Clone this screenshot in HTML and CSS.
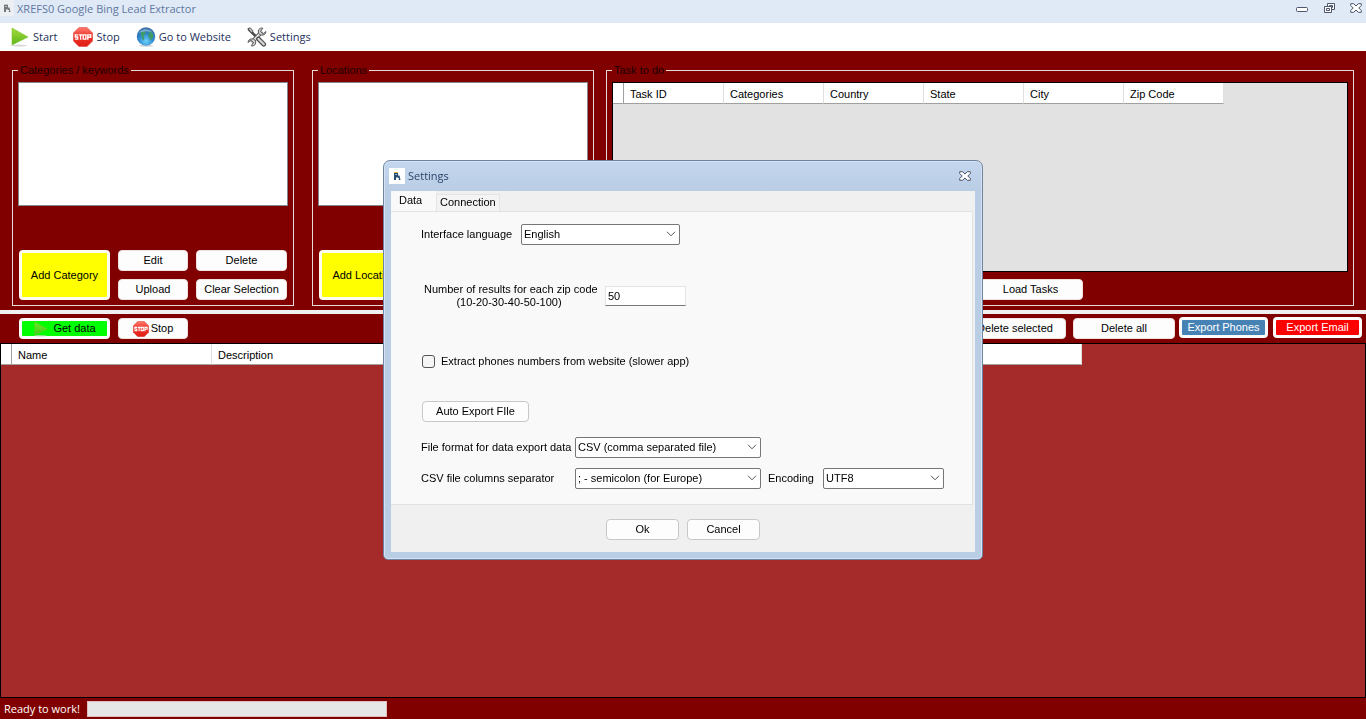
FILE: index.html
```html
<!DOCTYPE html>
<html lang="en">
<head>
<meta charset="utf-8">
<title>XREFS0 Google Bing Lead Extractor</title>
<link rel="stylesheet" href="styles.css">
</head>
<body>
<svg class="defs" aria-hidden="true">
  <defs>
    <linearGradient id="green" x1="0" y1="0" x2="0" y2="1"><stop offset="0" stop-color="#a4dc3c"/><stop offset="1" stop-color="#5db51c"/></linearGradient>
    <linearGradient id="red" x1="0" y1="0" x2="0" y2="1"><stop offset="0" stop-color="#ff7a6e"/><stop offset=".5" stop-color="#ee3026"/><stop offset="1" stop-color="#e02018"/></linearGradient>
    <radialGradient id="sea" cx=".5" cy=".75" r=".7"><stop offset="0" stop-color="#6cd0fa"/><stop offset=".6" stop-color="#2c84cc"/><stop offset="1" stop-color="#3a6ea8"/></radialGradient>
    <symbol id="play" viewBox="0 0 20 20"><ellipse cx="9" cy="18.600" rx="8" ry="1" fill="#d8d8d8"/><path d="M2 1 18 10 2 18Z" fill="url(#green)" stroke="#7cc42c" stroke-width=".6"/></symbol>
    <symbol id="stop" viewBox="0 0 20 20"><path d="M6 .4h8L19.600 6v8L14 19.600H6L.4 14V6Z" fill="url(#red)" stroke="#d8453c" stroke-width=".6"/><g fill="none" stroke="#fff" stroke-width="1.400"><path d="M5 7.900H2.300v2.100h2.400v2.100H1.900M5.800 7.900h3.600M7.600 7.900v4.800M10.200 7.900h2.700v4.200h-2.700ZM14.800 12.700V7.900h2.900v2.400h-2.900"/></g></symbol>
    <symbol id="globe" viewBox="0 0 20 20"><ellipse cx="10" cy="18.800" rx="7" ry="1" fill="#d4d4d4"/><circle cx="10" cy="9.500" r="9.200" fill="url(#sea)"/><path d="M5 5 8 4l2 1-.5 1.500L8 8l-.5 2 1 1.500-1 2-1.500-2L5 8.500ZM12.500 4l2.500.5 2 2.500.5 3-2 2.500-1.500 1-.5-2.500-1.500-2 .5-2 1.500-1.200-1.500-.8Z" fill="#3f9a6c"/><path d="M2.500 6Q9-1 17 5.500 9 3 2.500 6Z" fill="#c8e8f8" opacity=".5"/></symbol>
    <symbol id="tools" viewBox="0 0 20 20"><path d="M2 2.500 8.500 9" stroke="#4c4c4c" stroke-width="2.600" stroke-linecap="round"/><path d="m4.500 15.500 10.500-11" stroke="#555" stroke-width="4"/><path d="m4.500 15.500 10.500-11" stroke="#dedede" stroke-width="2.200"/><path d="m11.500 12 5.300 5.300" stroke="#505050" stroke-width="4.600" stroke-linecap="round"/><path d="m11.500 12 5.300 5.300" stroke="#d8d8d8" stroke-width="2.200" stroke-linecap="round"/><path d="M19 4.500 16.300 6.800 13.500 4.500 15.800 1.200C12.500.4 10.500 3 11.700 6.500c1.800 2.500 6.800 2.300 7.300-2ZM1 15.500 3.700 13.200l2.800 2.300L4.200 18.800c3.300.8 5.300-1.800 4.100-5.300-1.800-2.500-6.800-2.300-7.300 2Z" fill="#d0d0d0" stroke="#555"/><path d="M1 1.500 3.200.8l3 3.200-2 2Z" fill="#bbb" stroke="#444" stroke-width=".8"/></symbol>
    <symbol id="closer" viewBox="0 0 12 10"><path d="M.7.700h3L6 3l2.300-2.300h3v1.800L8.800 5l2.500 2.500v1.800h-3L6 7 3.700 9.300h-3V7.500L3.200 5 .7 2.500Z" fill="#fff" stroke="#4d566c"/></symbol>
    <symbol id="chevron" viewBox="0 0 10 6"><path d="m1 .8 4 4 4-4" fill="none" stroke="#555"/></symbol>
    <symbol id="app" viewBox="0 0 8 8"><path d="M1 1h4v2.500h1.500L7.500 8H5.800L5 5.500H3V8H1Z" fill="#244e78"/><path d="M1 0h4v1H1Z" fill="#e2b33c"/><path d="M2.500 2h1v1h-1ZM5 6h1v1H5Z" fill="#fff"/></symbol>
  </defs>
</svg>

<div class="window">
  <header class="titlebar">
    <span class="app-icon small"><svg><use href="#app"/></svg></span>
    <h1>XREFS0 Google Bing Lead Extractor</h1>
    <div class="window-buttons">
      <button type="button" aria-label="Minimize"><svg width="12" height="10" viewBox="0 0 12 10"><rect x=".5" y="4.500" width="11" height="4" rx="1" fill="#fff" stroke="#4d566c"/></svg></button>
      <button type="button" aria-label="Restore"><svg width="12" height="10" viewBox="0 0 12 10"><g fill="#fff" stroke="#4d566c"><path d="M4.500.500h7v6h-7Z"/><path d="M6.500 2.500h3v2h-3Z"/><path d="M1.500 3.500h7v6h-7Z"/><path d="M3.500 5.500h3v2h-3Z"/></g></svg></button>
      <button type="button" aria-label="Close"><svg width="12" height="10"><use href="#closer"/></svg></button>
    </div>
  </header>

  <nav class="toolbar">
    <button type="button"><svg><use href="#play"/></svg>Start</button>
    <button type="button"><svg><use href="#stop"/></svg>Stop</button>
    <button type="button"><svg><use href="#globe"/></svg>Go to Website</button>
    <button type="button"><svg><use href="#tools"/></svg>Settings</button>
  </nav>

  <section class="setup">
    <fieldset class="group picker">
      <legend>Categories / keywords</legend>
      <div class="listbox"></div>
      <div class="picker-buttons">
        <button type="button" class="btn yellow">Add Category</button>
        <button type="button" class="btn">Edit</button>
        <button type="button" class="btn">Delete</button>
        <button type="button" class="btn">Upload</button>
        <button type="button" class="btn">Clear Selection</button>
      </div>
    </fieldset>
    <fieldset class="group picker locations">
      <legend>Locations</legend>
      <div class="listbox"></div>
      <div class="picker-buttons">
        <button type="button" class="btn yellow">Add Location</button>
      </div>
    </fieldset>
    <fieldset class="group tasks">
      <legend>Task to do</legend>
      <div class="grid-view">
        <table>
          <colgroup><col class="row-head"><col class="c100"><col class="c100"><col class="c100"><col class="c100"><col class="c100"><col class="c100"></colgroup>
          <thead><tr><td></td><th>Task ID</th><th>Categories</th><th>Country</th><th>State</th><th>City</th><th>Zip Code</th></tr></thead>
        </table>
      </div>
      <div class="task-buttons"><button type="button" class="btn">Load Tasks</button></div>
    </fieldset>
  </section>

  <section class="actions">
    <button type="button" class="btn green"><svg><use href="#play"/></svg>Get data</button>
    <button type="button" class="btn stop"><svg><use href="#stop"/></svg>Stop</button>
    <div class="actions-right">
      <button type="button" class="btn wide">Delete selected</button>
      <button type="button" class="btn wide">Delete all</button>
      <div class="exports">
        <button type="button" class="btn blue">Export Phones</button>
        <button type="button" class="btn red">Export Email</button>
      </div>
    </div>
  </section>

  <main class="results">
    <table>
      <colgroup><col class="row-head"><col class="c200"><col class="c870"></colgroup>
      <thead><tr><td></td><th>Name</th><th>Description</th></tr></thead>
    </table>
  </main>

  <footer class="status">
    <span>Ready to work!</span>
    <div class="progress" role="progressbar" aria-label="Progress" aria-valuenow="0"></div>
  </footer>
</div>

<div class="overlay">
  <form class="dialog" role="dialog" aria-labelledby="dialog-title">
    <div class="dialog-title">
      <span class="app-icon"><svg><use href="#app"/></svg></span>
      <h2 id="dialog-title">Settings</h2>
      <button type="button" aria-label="Close"><svg width="12" height="10"><use href="#closer"/></svg></button>
    </div>
    <div class="dialog-body">
      <div class="tabs" role="tablist">
        <button type="button" role="tab" aria-selected="true" class="tab active">Data</button>
        <button type="button" role="tab" aria-selected="false" class="tab">Connection</button>
      </div>
      <div class="panel" role="tabpanel">
        <div class="row language">
          <label for="lang">Interface language</label>
          <span class="combo"><select id="lang"><option>English</option></select><svg><use href="#chevron"/></svg></span>
        </div>
        <div class="row results-count">
          <label for="count">Number of results for each zip code<br>(10-20-30-40-50-100)</label>
          <input id="count" type="text" value="50">
        </div>
        <div class="row extract">
          <input id="extract" type="checkbox"><label for="extract">Extract phones numbers from website (slower app)</label>
        </div>
        <div class="row"><button type="button" class="btn framed export-file">Auto Export FIle</button></div>
        <div class="export-grid">
          <label for="format">File format for data export data</label>
          <span class="combo"><select id="format"><option>CSV (comma separated file)</option></select><svg><use href="#chevron"/></svg></span>
          <label for="separator" class="second">CSV file columns separator</label>
          <span class="combo"><select id="separator"><option>; - semicolon (for Europe)</option></select><svg><use href="#chevron"/></svg></span>
          <label for="encoding" class="encoding">Encoding</label>
          <span class="combo"><select id="encoding"><option>UTF8</option></select><svg><use href="#chevron"/></svg></span>
        </div>
      </div>
      <div class="dialog-footer">
        <button type="submit" class="btn framed">Ok</button>
        <button type="button" class="btn framed">Cancel</button>
      </div>
    </div>
  </form>
</div>
</body>
</html>
```
FILE: styles.css
```css
* { box-sizing: border-box; }

body {
  margin: 0;
  background: #800000;
  color: #000;
  font: 11px/13px "Liberation Sans", Arial, sans-serif;
}

button, input, select { font: inherit; color: inherit; margin: 0; }
button { padding: 0; border: 0; background: none; }
h1, h2 { margin: 0; font-weight: 400; }
svg { display: block; flex: none; }
.defs { position: absolute; width: 0; height: 0; }

.window { display: flex; flex-direction: column; min-height: 100vh; }

/* Title bar and toolbar */
.titlebar {
  display: flex;
  align-items: flex-start;
  height: 23px;
  background: #dfeaf6;
  color: #61779f;
}
.titlebar h1 { padding-left: 3px; font: 11px/18px "Open Sans", sans-serif; }
.app-icon {
  display: grid;
  place-items: center;
  width: 16px;
  height: 16px;
  background: #fff;
}
.app-icon svg { width: 8px; height: 8px; }
.app-icon.small { width: 14px; background: #eef4fb; opacity: 0.7; filter: grayscale(1); }
.window-buttons { display: flex; gap: 15px; margin-left: auto; padding: 3px 4px 0 0; }

.toolbar {
  display: flex;
  align-items: center;
  gap: 16px;
  height: 28px;
  padding-left: 10px;
  background: #fff;
  color: #1b2f5c;
}
.toolbar button {
  display: flex;
  align-items: center;
  gap: 3px;
  font: 11px/20px "Open Sans", sans-serif;
}
.toolbar svg { width: 20px; height: 20px; }

/* Setup groups */
.setup { display: flex; height: 259px; padding: 12px 12px 4px; }
.group { min-width: 0; margin: 0; padding: 5px; border: 1px solid #e8dada; }
.group legend { padding: 0 2px; line-height: 14px; color: #1c0000; }
.picker { flex: 0 0 282px; margin-right: 18px; }
.picker.locations { margin-right: 12px; }
.listbox { height: 124px; background: #fff; border: 1px solid #828790; }
.picker-buttons {
  display: grid;
  grid-template-columns: 91px 70px 91px;
  grid-template-rows: 21px 21px;
  gap: 8px;
  padding: 44px 1px 0;
}

.btn {
  height: 21px;
  background: #fdfdfd;
  border: 1px solid #f0e0e0;
  border-radius: 4px;
  text-align: center;
}
.btn.yellow { grid-row: span 2; height: 50px; background: #ff0; border: 3px solid #fdfdf0; }
.btn.green, .btn.blue, .btn.red { width: 89px; border: 3px solid #fdfdfd; }
.btn.green { width: 91px; background: #0f0; }
.btn.blue { background: #4682b4; color: #fff; }
.btn.red { background: #f00; color: #fff; }
.btn.framed { border: 1px solid #c8c8c8; }

.tasks { flex: 1; }
.grid-view { height: 190px; background: #e2e2e2; border: 1px solid #000; overflow: hidden; }
.task-buttons { display: flex; padding: 7px 0 0 366px; }
.task-buttons .btn { width: 105px; }

table { table-layout: fixed; width: 0; border-collapse: separate; border-spacing: 0; background: #fff; }
.row-head { width: 11px; }
.c100 { width: 100px; }
.c200 { width: 200px; }
.c870 { width: 870px; }
thead td, thead th {
  height: 21px;
  padding: 2px 6px 0;
  border-right: 1px solid #e0e0e0;
  border-bottom: 1px solid #a0a0a0;
  font-weight: 400;
  text-align: left;
}
thead td { padding: 0; border-right-color: #a0a0a0; }

/* Scraper actions */
.actions {
  display: flex;
  gap: 8px;
  height: 33px;
  padding: 4px 4px 0 19px;
  border-top: 4px solid #f0f0f0;
}
.actions .green, .actions .stop { display: flex; align-items: center; justify-content: center; gap: 2px; }
.actions .green { gap: 4px; }
.actions svg { width: 16px; height: 16px; }
.actions .green svg { opacity: 0.7; }
.actions .stop { width: 70px; }
.actions-right { display: flex; gap: 7px; margin-left: auto; }
.btn.wide { width: 102px; }
.exports { display: flex; gap: 5px; margin: -1px 0 0 -3px; }

.results { flex: 1; background: #a52a2a; border: 1px solid #000; overflow: hidden; }

.status { display: flex; align-items: center; height: 21px; padding-left: 4px; color: #fff; }
.status span { width: 83px; font: 11px/18px "Open Sans", sans-serif; }
.progress { width: 300px; height: 16px; background: #e6e6e6; border: 1px solid #e0bcbc; }

/* Settings dialog */
.overlay {
  position: fixed;
  inset: 0;
  display: grid;
  place-items: center;
}
.dialog {
  width: 600px;
  padding: 0 7px 7px;
  background: linear-gradient(#c3d6ee, #b9cde5 30px);
  border: 1px solid #71849f;
  border-radius: 7px 7px 5px 5px;
  box-shadow: inset 0 0 0 1px #d4e2f4;
}
.dialog-title { display: flex; align-items: center; height: 30px; padding-right: 4px; }
.dialog-title .app-icon { margin-left: -2px; }
.dialog-title h2 { padding-left: 3px; color: #2b4468; font: 11px/20px "Open Sans", sans-serif; }
.dialog-title button { margin-left: auto; }
.dialog-body { background: #f0f0f0; }
.tabs { display: flex; align-items: flex-end; height: 20px; }
.tab { height: 17px; padding: 0 3px; border: 1px solid #e4e4e4; border-bottom: 0; background: #f4f4f4; }
.tab.active { width: 45px; height: 20px; padding: 0 8px; border: 0; background: #f9f9f9; text-align: left; }
.panel {
  margin-right: 2px;
  padding: 12px 28px 15px 30px;
  background: #f9f9f9;
  border: 1px solid #e2e2e2;
  border-left: 0;
}
.row { display: flex; align-items: center; }
.language { gap: 8px; }
.language label { width: 92px; white-space: nowrap; }
.language .combo { width: 159px; }
.results-count { gap: 11px; padding: 38px 0 46px 3px; }
.results-count label { width: 170px; text-align: center; white-space: nowrap; }
.results-count input {
  width: 81px;
  height: 20px;
  padding: 0 2px;
  background: #fff;
  border: 1px solid #e4e4e4;
  border-bottom-color: #777;
}
.extract { gap: 6px; padding-bottom: 33px; }
.extract input {
  appearance: none;
  width: 13px;
  height: 13px;
  margin-left: 1px;
  background: #f5f5f5;
  border: 1px solid #555;
  border-radius: 3px;
}
.export-file { width: 107px; margin-left: 1px; }
.combo { display: grid; align-items: center; }
.combo select, .combo svg { grid-area: 1 / 1; }
.combo select {
  appearance: none;
  width: 100%;
  height: 21px;
  padding: 0 18px 0 2px;
  background: #fff;
  border: 1px solid #767676;
  border-radius: 2px;
}
.combo svg { justify-self: end; width: 10px; height: 6px; margin-right: 4px; pointer-events: none; }
.export-grid {
  display: grid;
  grid-template-columns: 154px 186px 62px 121px;
  row-gap: 10px;
  align-items: center;
  padding-top: 15px;
}
.export-grid .second { grid-column: 1; }
.encoding { padding-left: 7px; }
.dialog-footer { display: flex; justify-content: center; gap: 8px; padding: 14px 0 12px; }
.dialog-footer .btn { width: 73px; }
```
